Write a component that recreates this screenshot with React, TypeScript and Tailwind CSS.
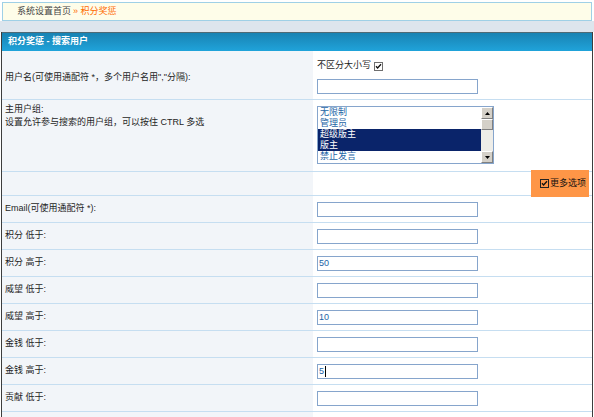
import React from "react";

const font = "font-['Liberation_Sans','Noto_Sans_CJK_SC',sans-serif]";

function Check({ light }: { light?: boolean }) {
  return (
    <svg width="9" height="9" viewBox="0 0 9 9" className="shrink-0">
      <rect x="0.5" y="0.5" width="8" height="8" fill={light ? "#ffffff" : "none"} stroke={light ? "#6f6f6f" : "#222"} />
      <path d="M2 4.2 L3.6 6 L7 2.2" fill="none" stroke="#111" strokeWidth="1.3" />
    </svg>
  );
}

function Input({ value, caret }: { value?: string; caret?: boolean }) {
  return (
    <div className="w-[161px] h-[15px] border border-[#86a5cc] bg-white flex items-center pl-[1px] text-[9px] leading-none text-[#1d64a6]">
      {value}
      {caret && <span className="w-px h-[11px] bg-black ml-px" />}
    </div>
  );
}

function FieldRow({ label, value, caret }: { label?: string; value?: string; caret?: boolean }) {
  return (
    <div className="flex h-[27px] border-b border-[#c6def1]">
      <div className="w-[311px] bg-[#f2f5f9] pl-[3px] flex items-center">{label}</div>
      <div className="flex-1 pl-[4px] flex items-center">
        <Input value={value} caret={caret} />
      </div>
    </div>
  );
}

const groups = [
  { name: "无限制", sel: false },
  { name: "管理员", sel: false },
  { name: "超级版主", sel: true },
  { name: "版主", sel: true },
  { name: "禁止发言", sel: false },
];

function Arrow({ up }: { up?: boolean }) {
  return (
    <div className="h-[12px] bg-[#d4d0c8] border border-t-white border-l-white border-r-[#808080] border-b-[#808080] flex items-center justify-center">
      <svg width="5" height="3" viewBox="0 0 5 3">
        <path d={up ? "M0 3 L2.5 0 L5 3 Z" : "M0 0 L2.5 3 L5 0 Z"} fill="#000" />
      </svg>
    </div>
  );
}

function GroupList() {
  return (
    <div className="w-[177px] h-[58px] border border-[#86a5cc] bg-white flex">
      <div className="flex-1 flex flex-col">
        {groups.map((g) => (
          <div
            key={g.name}
            className={
              "h-[11px] leading-[10px] pl-[2px] text-[9px] " +
              (g.sel ? "bg-[#0a246a] text-white" : "text-[#1d64a6]")
            }
          >
            {g.name}
          </div>
        ))}
      </div>
      <div className="w-[12px] flex flex-col bg-[#eeede8]">
        <Arrow up />
        <div className="h-[11px] bg-[#d4d0c8] border border-t-white border-l-white border-r-[#808080] border-b-[#808080]" />
        <div className="flex-1" />
        <Arrow />
      </div>
    </div>
  );
}

export default function App() {
  return (
    <div className={`${font} w-[594px] h-[417px] overflow-hidden bg-white text-[9px] text-[#1e1e1e]`}>
      {/* 导航 */}
      <div className="mx-[2px] mt-[2px] h-[19px] border border-[#9fd0e6] bg-[#fefde9] flex items-center pl-[14px] text-[#444]">
        系统设置首页
        <span className="text-[#ff6a00] ml-[2px]">» 积分奖惩</span>
      </div>
      <div className="h-[11px] bg-[#dde5ed]" />

      <div className="mx-[1px] border-x border-[#3d3d3d]">
        {/* 标题 */}
        <div className="h-[19px] border-t border-[#4f6a75] bg-linear-to-b from-[#1883b3] to-[#20a3da] flex items-center pl-[6px] text-white font-bold">
          积分奖惩 - 搜索用户
        </div>

        {/* 用户名 */}
        <div className="flex h-[49px] border-b border-[#c6def1]">
          <div className="w-[311px] bg-[#f2f5f9] pl-[3px] pt-[5px] flex items-center">
            用户名(可使用通配符 *，多个用户名用","分隔):
          </div>
          <div className="flex-1 pl-[4px] pt-[9px] flex flex-col">
            <div className="flex items-center gap-[3px] h-[12px]">
              不区分大小写
              <Check light />
            </div>
            <div className="mt-[7px]">
              <Input />
            </div>
          </div>
        </div>

        {/* 主用户组 */}
        <div className="flex h-[72px] border-b border-[#c6def1]">
          <div className="w-[311px] bg-[#f2f5f9] pl-[3px] pt-[3px] leading-[12.5px]">
            <div>主用户组:</div>
            <div>设置允许参与搜索的用户组，可以按住 CTRL 多选</div>
          </div>
          <div className="flex-1 pl-[4px] pt-[6px]">
            <GroupList />
          </div>
        </div>

        {/* 更多选项 */}
        <div className="flex h-[24px] border-b border-[#c6def1]">
          <div className="w-[311px] bg-[#f2f5f9]" />
          <div className="flex-1 flex justify-end pr-[3px]">
            <div className="relative -mt-[2px] h-[27px] w-[58px] bg-[#fe9647] flex items-center justify-end pr-[3px] gap-[1px] text-[#111]">
              <Check />
              更多选项
            </div>
          </div>
        </div>

        <FieldRow label="Email(可使用通配符 *):" />
        <FieldRow label="积分 低于:" />
        <FieldRow label="积分 高于:" value="50" />
        <FieldRow label="威望 低于:" />
        <FieldRow label="威望 高于:" value="10" />
        <FieldRow label="金钱 低于:" />
        <FieldRow label="金钱 高于:" value="5" caret />
        <FieldRow label="贡献 低于:" />
        <FieldRow />
      </div>
    </div>
  );
}
